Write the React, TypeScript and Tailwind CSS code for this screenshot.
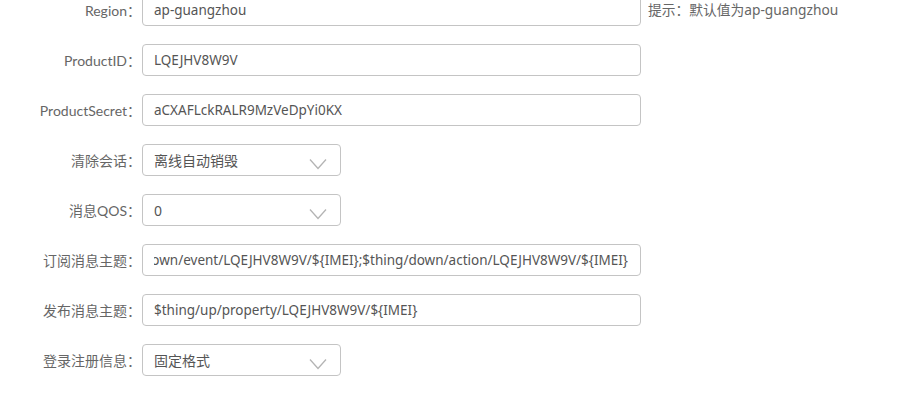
import type { ReactNode } from "react";

type Row =
  | { kind: "input"; label: string; value: string; hint?: string; scrolled?: boolean }
  | { kind: "select"; label: string; value: string };

const rows: Row[] = [
  { kind: "input", label: "Region：", value: "ap-guangzhou", hint: "提示：默认值为ap-guangzhou" },
  { kind: "input", label: "ProductID：", value: "LQEJHV8W9V" },
  { kind: "input", label: "ProductSecret：", value: "aCXAFLckRALR9MzVeDpYi0KX" },
  { kind: "select", label: "清除会话：", value: "离线自动销毁" },
  { kind: "select", label: "消息QOS：", value: "0" },
  {
    kind: "input",
    label: "订阅消息主题：",
    value: "$thing/down/event/LQEJHV8W9V/${IMEI};$thing/down/action/LQEJHV8W9V/${IMEI}",
    scrolled: true,
  },
  { kind: "input", label: "发布消息主题：", value: "$thing/up/property/LQEJHV8W9V/${IMEI}" },
  { kind: "select", label: "登录注册信息：", value: "固定格式" },
];

const labelFont = { fontFamily: '"Lato", "Noto Sans CJK SC", sans-serif' };
const valueFont = { fontFamily: '"Noto Sans", "Noto Sans CJK SC", sans-serif' };

function Chevron() {
  return (
    <svg width="18" height="12" viewBox="0 0 18 12" fill="none" className="mt-[8px]">
      <path d="M1 1.5 L9 10.5 L17 1.5" stroke="#b4b4b4" strokeWidth="1.3" />
    </svg>
  );
}

function Field({ label, children }: { label: string; children: ReactNode }) {
  return (
    <div className="flex h-[32px] items-center">
      <div className="w-[142px] shrink-0 pr-[1px] text-right text-[14px] text-[#666]" style={labelFont}>
        {label}
      </div>
      {children}
    </div>
  );
}

export default function App() {
  return (
    <div className="h-[404px] w-[913px] overflow-hidden bg-white text-[13.5px] text-[#555]" style={valueFont}>
      <div className="mt-[-6px] flex flex-col gap-[18px]">
        {rows.map((row) => (
          <Field key={row.label} label={row.label}>
            {row.kind === "input" ? (
              <>
                <div className="flex h-[32px] w-[499px] items-center rounded-[4px] border border-[#c4c4c4] pl-[11px] pr-[12px]">
                  <div
                    className={
                      row.scrolled
                        ? "flex w-full justify-end overflow-hidden whitespace-nowrap"
                        : "w-full overflow-hidden whitespace-nowrap"
                    }
                  >
                    <span className="shrink-0">{row.value}</span>
                  </div>
                </div>
                {row.hint && <span className="ml-[7px] text-[13.75px] text-[#666]">{row.hint}</span>}
              </>
            ) : (
              <div className="flex h-[32px] w-[199px] items-center justify-between rounded-[4px] border border-[#c4c4c4] pl-[11px] pr-[13px]">
                <span className="text-[14px]">{row.value}</span>
                <Chevron />
              </div>
            )}
          </Field>
        ))}
      </div>
    </div>
  );
}
